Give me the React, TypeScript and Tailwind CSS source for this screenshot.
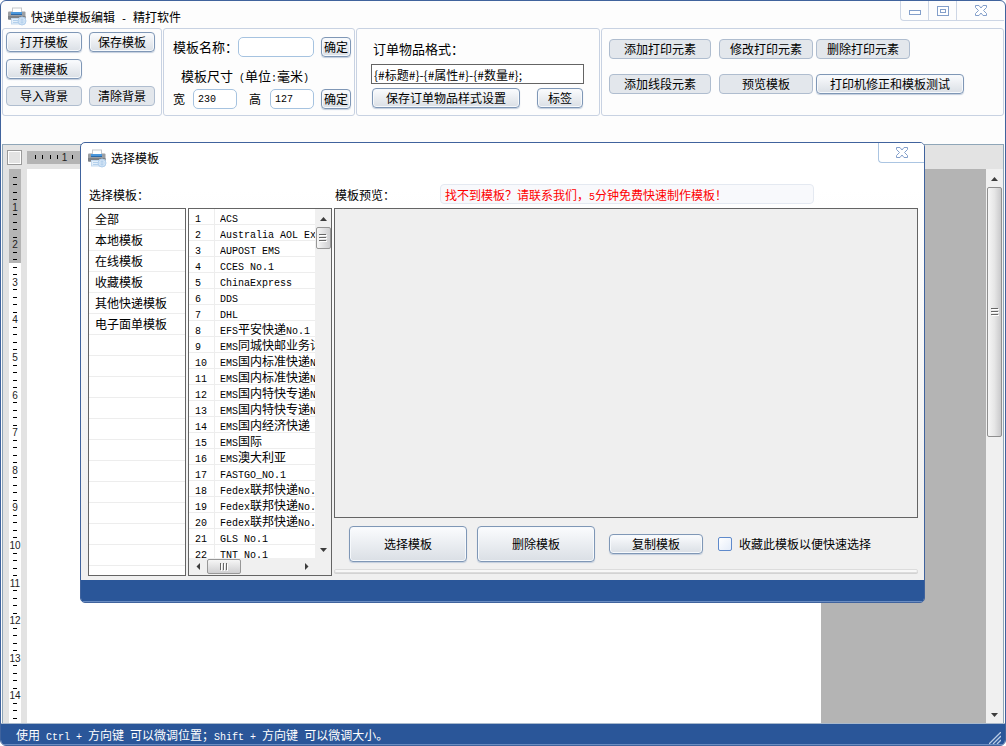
import React from "react";

const CATEGORIES = ["全部", "本地模板", "在线模板", "收藏模板", "其他快递模板", "电子面单模板"];

const TEMPLATES = [
  "ACS",
  "Australia AOL Express",
  "AUPOST EMS",
  "CCES No.1",
  "ChinaExpress",
  "DDS",
  "DHL",
  "EFS平安快递No.1",
  "EMS同城快邮业务详情单",
  "EMS国内标准快递No.1",
  "EMS国内标准快递No.2",
  "EMS国内特快专递No.1",
  "EMS国内特快专递No.2",
  "EMS国内经济快递",
  "EMS国际",
  "EMS澳大利亚",
  "FASTGO_NO.1",
  "Fedex联邦快递No.1",
  "Fedex联邦快递No.2",
  "Fedex联邦快递No.3",
  "GLS No.1",
  "TNT No.1",
];

/* Sets Latin runs in a half-width face next to full-width Chinese. */
function Mixed({ text }: { text: string }) {
  return (
    <span className="whitespace-pre">
      {text.split(/([\x20-\x7e]+)/).map((part, i) =>
        i % 2 === 1 ? (
          <span key={i} className="font-['Liberation_Mono',monospace] text-[10px] leading-none">
            {part}
          </span>
        ) : (
          part
        ),
      )}
    </span>
  );
}

function Btn({
  children,
  className = "",
  off = false,
}: {
  children: React.ReactNode;
  className?: string;
  off?: boolean;
}) {
  const look = off
    ? "border-[#afbdcf] bg-[#e3e7ec]"
    : "border-[#7f97b6] bg-linear-to-b from-[#fbfcfe] to-[#dadfe5] shadow-[0_1px_1px_#c3cedd,inset_0_0_0_1px_#f6f9fc]";
  return (
    <button
      type="button"
      aria-disabled={off}
      className={`flex shrink-0 items-center justify-center whitespace-nowrap rounded-[4px] border ${look} ${className}`}
    >
      {children}
    </button>
  );
}

function PrinterIcon() {
  return (
    <svg width="19" height="19" viewBox="0 0 19 19" aria-hidden="true">
      <rect x="0" y="4.500" width="17.500" height="8.500" rx="1" fill="#9b9ea2" />
      <rect x="0" y="9" width="17.500" height="3" fill="#7c8085" />
      <rect x="4.500" y="1" width="9" height="5" fill="#fff" stroke="#c3c7cc" />
      <rect x="3" y="5" width="11" height="2" fill="#4a97dc" />
      <rect x="3" y="7" width="11" height="1" fill="#2b69a8" />
      <rect x="3.500" y="11.500" width="9" height="5.500" fill="#e3effa" stroke="#c3d9ef" />
      <path d="M5 13.500h6M5 15.500h5" stroke="#b3d0ec" />
      <circle cx="14" cy="14" r="4" fill="#e6f0fa" stroke="#b2cfec" />
      <path d="M14 10v8M10 14h8M11 11.700q3 1.500 6 0M11 16.300q3-1.500 6 0" stroke="#b2cfec" fill="none" />
    </svg>
  );
}

function CloseIcon() {
  return (
    <svg width="12" height="11" viewBox="0 0 12 11" aria-hidden="true">
      <path
        d="M.5.5H4L6 3 8 .5h3.500V2.500L8.500 5.500 11.500 8.500V10.500H8L6 8 4 10.500H.5V8.500L3.500 5.500.5 2.500Z"
        fill="#fff"
        stroke="#839fca"
      />
    </svg>
  );
}

function Arrow({ dir }: { dir: "up" | "down" | "left" | "right" }) {
  const d = {
    up: "M0 6h7L3.500 2Z",
    down: "M0 2h7L3.500 6Z",
    left: "M5 0v7L1.500 3.500Z",
    right: "M2 0v7L5.500 3.500Z",
  }[dir];
  return (
    <svg width="7" height="7" viewBox="0 0 7 7" aria-hidden="true">
      <path d={d} fill="#3c3c3c" />
    </svg>
  );
}

function VGrip() {
  return (
    <svg width="8" height="9" viewBox="0 0 8 9" aria-hidden="true">
      <path d="M0 .5h7M0 3.500h7M0 6.500h7" stroke="#666" />
      <path d="M1 1.500h7M1 4.500h7M1 7.500h7" stroke="#fff" />
    </svg>
  );
}

function HGrip() {
  return (
    <svg width="9" height="8" viewBox="0 0 9 8" aria-hidden="true">
      <path d="M.5 0v7M3.500 0v7M6.500 0v7" stroke="#666" />
      <path d="M1.500 1v7M4.500 1v7M7.500 1v7" stroke="#fff" />
    </svg>
  );
}

const CM = 37.6;

function HorizontalRuler() {
  const marks = Array.from({ length: 9 }, (_, i) => i + 1);
  return (
    <svg className="h-[13px] w-[794px] bg-[#b4b4b4]" aria-hidden="true">
      {marks.map((n) => {
        const x = (n * CM) / 5;
        return n % 5 === 0 ? (
          <text key={n} x={x} y="10" textAnchor="middle" fontSize="10" fontFamily="Liberation Sans" fill="#222">
            {n / 5}
          </text>
        ) : (
          <rect key={n} x={Math.round(x)} y="4" width="1" height="4" fill="#000" />
        );
      })}
    </svg>
  );
}

function VerticalRuler() {
  const marks = Array.from({ length: 73 }, (_, i) => i + 1);
  return (
    <svg className="h-full w-3 shrink-0 bg-white" aria-hidden="true">
      <rect width="12" height="94" fill="#b4b4b4" />
      {marks.map((n) => {
        const y = (n * CM) / 5;
        return n % 5 === 0 ? (
          <text key={n} x="6" y={Math.round(y) + 4} textAnchor="middle" fontSize="10" fontFamily="Liberation Sans" fill="#222">
            {n / 5}
          </text>
        ) : (
          <rect key={n} x="4" y={Math.round(y)} width="4" height="1" fill="#000" />
        );
      })}
    </svg>
  );
}

const PANEL = "rounded-[3px] border border-[#c8d2e2]";
const FIELD = "h-5 min-w-0 rounded-[5px] border border-[#a6c3e0] bg-white px-1 font-['Liberation_Mono',monospace] text-[10px]";

function Toolbar() {
  return (
    <div className="flex h-[88px] gap-px px-px">
      <section className={`${PANEL} grid w-40 shrink-0 grid-cols-[76px_66px] content-start gap-[7px] p-[3px]`}>
        <Btn className="h-5">打开模板</Btn>
        <Btn className="h-5">保存模板</Btn>
        <Btn className="col-span-2 h-5 w-[76px]">新建模板</Btn>
        <Btn off className="h-5">导入背景</Btn>
        <Btn off className="h-5">清除背景</Btn>
      </section>

      <section className={`${PANEL} flex w-48 shrink-0 flex-col pt-2 pr-[3px] pl-[9px]`}>
        <div className="flex items-center">
          <label htmlFor="tpl-name" className="w-[65px] text-[13px] whitespace-nowrap">
            模板名称：
          </label>
          <input id="tpl-name" className={`${FIELD} w-[76px]`} />
          <Btn className="ml-[7px] h-5 w-[30px]">确定</Btn>
        </div>
        <p className="h-8 pt-[11px] pl-2 text-[13px] leading-4">
          <Mixed text="模板尺寸 (单位:毫米)" />
        </p>
        <div className="flex items-center">
          <label htmlFor="tpl-w" className="w-5">宽</label>
          <input id="tpl-w" defaultValue="230" className={`${FIELD} w-11`} />
          <label htmlFor="tpl-h" className="ml-3 w-[21px]">高</label>
          <input id="tpl-h" defaultValue="127" className={`${FIELD} w-11`} />
          <Btn className="ml-[7px] h-5 w-[30px]">确定</Btn>
        </div>
      </section>

      <section className={`${PANEL} flex w-[244px] shrink-0 flex-col px-[14px] pt-3`}>
        <label htmlFor="order-fmt" className="h-[23px] pl-[2px] text-[13px] leading-4">
          订单物品格式：
        </label>
        <input
          id="order-fmt"
          defaultValue="{#标题#}-{#属性#}-{#数量#};"
          className="h-5 w-[213px] border border-[#646464] bg-white px-[2px]"
        />
        <div className="mt-1 flex justify-between pr-[2px] pl-px">
          <Btn className="h-5 w-[148px]">保存订单物品样式设置</Btn>
          <Btn className="h-5 w-[46px]">标签</Btn>
        </div>
      </section>

      <section className={`${PANEL} flex min-w-0 flex-1 flex-col gap-[15px] px-[7px] pt-[10px]`}>
        <div className="flex">
          <Btn off className="h-5 w-[102px]">添加打印元素</Btn>
          <Btn off className="ml-2 h-5 w-[94px]">修改打印元素</Btn>
          <Btn off className="ml-[3px] h-5 w-[94px]">删除打印元素</Btn>
        </div>
        <div className="flex">
          <Btn off className="h-5 w-[102px]">添加线段元素</Btn>
          <Btn off className="ml-2 h-5 w-[94px]">预览模板</Btn>
          <Btn className="ml-[3px] h-5 w-[148px]">打印机修正和模板测试</Btn>
        </div>
      </section>
    </div>
  );
}

function Workspace() {
  return (
    <div className="mx-px mt-7 flex min-h-0 flex-1 flex-col overflow-hidden border-x border-t border-[#8fa6b8] bg-[#e3e3e3]">
      <div className="flex h-6 shrink-0 items-center gap-[5px] overflow-hidden pl-1">
        <div className="size-[15px] shrink-0 border border-[#9a9a9a] bg-[#e3e3e3] shadow-[inset_0_0_0_1px_#fff]" />
        <HorizontalRuler />
      </div>
      <div className="flex min-h-0 flex-1">
        <div className="w-6 shrink-0 overflow-hidden pl-1.5">
          <VerticalRuler />
        </div>
        <div className="flex min-w-0 flex-1 bg-[#b4b4b4]">
          <div className="w-[794px] bg-white" />
        </div>
        <div className="flex w-[17px] shrink-0 flex-col items-center bg-[#f0f0f0] px-px">
          <button type="button" aria-label="向上滚动" className="flex h-[18px] w-full items-center justify-center">
            <Arrow dir="up" />
          </button>
          <div className="flex h-[250px] w-full items-center justify-center rounded-[2px] border border-[#8f8f8f] bg-linear-to-r from-[#f6f6f6] via-[#e6e6e6] to-[#c9c9cb]">
            <VGrip />
          </div>
          <div className="flex-1" />
          <button type="button" aria-label="向下滚动" className="flex h-[18px] w-full items-center justify-center">
            <Arrow dir="down" />
          </button>
        </div>
      </div>
    </div>
  );
}

function TemplateList() {
  return (
    <div className="flex w-36 shrink-0 flex-col border border-[#646464] bg-[#f0f0f0]">
      <div className="flex h-[349px]">
        <div className="min-w-0 flex-1 overflow-hidden bg-white">
          <table className="w-full table-fixed border-separate border-spacing-0">
            <tbody>
              {TEMPLATES.map((name, i) => (
                <tr key={name}>
                  <td className="w-[26px] border-r border-b border-[#ededed] p-0 pl-1.5">
                    <div className="h-[15px] leading-[15px]">
                      <Mixed text={String(i + 1)} />
                    </div>
                  </td>
                  <td className="border-b border-[#ededed] p-0 pl-[5px]">
                    <div className="h-[15px] overflow-hidden leading-[15px]">
                      <Mixed text={name} />
                    </div>
                  </td>
                </tr>
              ))}
            </tbody>
          </table>
        </div>
        <div className="flex w-4 shrink-0 flex-col items-center">
          <button type="button" aria-label="列表向上" className="flex h-[18px] w-full items-center justify-center">
            <Arrow dir="up" />
          </button>
          <div className="flex h-[22px] w-[15px] items-center justify-center rounded-[2px] border border-[#979797] bg-linear-to-r from-[#f6f6f6] to-[#cfcfd1]">
            <VGrip />
          </div>
          <div className="flex-1" />
          <button type="button" aria-label="列表向下" className="flex h-[18px] w-full items-center justify-center">
            <Arrow dir="down" />
          </button>
        </div>
      </div>
      <div className="flex h-[17px] items-center pr-4">
        <button type="button" aria-label="列表向左" className="flex h-full w-[18px] items-center justify-center">
          <Arrow dir="left" />
        </button>
        <div className="flex h-[15px] w-[34px] items-center justify-center rounded-[2px] border border-[#979797] bg-linear-to-b from-[#f6f6f6] to-[#cfcfd1]">
          <HGrip />
        </div>
        <div className="flex-1" />
        <button type="button" aria-label="列表向右" className="flex h-full w-[18px] items-center justify-center">
          <Arrow dir="right" />
        </button>
      </div>
    </div>
  );
}

function TemplateDialog() {
  return (
    <div
      role="dialog"
      aria-label="选择模板"
      className="absolute top-[141px] right-20 left-[79px] flex flex-col overflow-hidden rounded-[5px] border border-[#40639d] bg-linear-to-b from-white from-10% to-[#f0f0f0] to-80%"
    >
      <header className="flex h-[41px] pl-[7px]">
        <div className="flex h-[30px] flex-1 items-center gap-1">
          <PrinterIcon />
          <h2>选择模板</h2>
        </div>
        <button
          type="button"
          aria-label="关闭"
          className="flex h-5 w-[46px] items-center justify-center rounded-bl-[4px] border-b border-l border-[#abc5e2] bg-white"
        >
          <CloseIcon />
        </button>
      </header>

      <div className="flex h-6 pl-2">
        <h3 className="w-[246px] shrink-0 leading-[22px]">选择模板：</h3>
        <h3 className="w-[105px] shrink-0 leading-[22px]">模板预览：</h3>
        <p className="h-5 w-[374px] rounded-[4px] border border-[#e4e9f1] bg-[#f8f9fc] pl-1 leading-[20px] whitespace-nowrap text-[#ff0000]">
          <Mixed text="找不到模板？请联系我们，5分钟免费快速制作模板！" />
        </p>
      </div>

      <div className="flex gap-[2px] pr-[6px] pl-[7px]">
        <ul className="h-[368px] w-[98px] shrink-0 overflow-hidden border border-[#646464] bg-white">
          {Array.from({ length: 18 }, (_, i) => (
            <li key={i} className="h-[21px] border-b border-[#ededed] pl-1.5 leading-[20px]">
              {CATEGORIES[i]}
            </li>
          ))}
        </ul>
        <TemplateList />
        <div className="flex min-w-0 flex-1 flex-col">
          <div className="h-[310px] border border-[#646464] bg-[#efefef]" />
          <div className="flex h-[51px] items-center pl-[15px]">
            <Btn className="h-9 w-[118px]">选择模板</Btn>
            <Btn className="ml-[10px] h-9 w-[118px]">删除模板</Btn>
            <Btn className="ml-[14px] h-5 w-[94px]">复制模板</Btn>
            <label className="ml-[15px] flex items-center gap-[7px] whitespace-nowrap">
              <input
                type="checkbox"
                className="size-[14px] appearance-none rounded-[2px] border border-[#5f8acb] bg-linear-to-br from-white to-[#e4ecf9]"
              />
              收藏此模板以便快速选择
            </label>
          </div>
          <div className="h-1 rounded-[2px] border border-[#dcdcdc] bg-[#f8f8f8] shadow-[0_1px_0_#d3d3d3]" />
        </div>
      </div>
      <footer className="mt-1 h-[22px] border-b border-[#6a8dc2] bg-[#2a5699]" />
    </div>
  );
}

export default function App() {
  return (
    <main className="relative flex h-screen min-h-[640px] flex-col overflow-hidden rounded-[6px] border border-[#40639d] bg-[#fdfdfd] font-['Noto_Sans_CJK_SC',sans-serif] text-xs leading-4 text-black">
      <header className="flex h-[27px] shrink-0 pl-[7px]">
        <div className="flex flex-1 items-center gap-1 pt-1">
          <PrinterIcon />
          <h1>
            <Mixed text="快递单模板编辑 - 精打软件" />
          </h1>
        </div>
        <div className="mr-px flex h-5 rounded-bl-[4px] border-b border-l border-[#cdd6e5]">
          <button type="button" aria-label="最小化" className="flex w-[28px] items-center justify-center border-r border-[#cdd6e5] pt-1">
            <svg width="12" height="5" viewBox="0 0 12 5" aria-hidden="true">
              <rect x=".5" y=".5" width="11" height="4" fill="#fff" stroke="#839fca" />
            </svg>
          </button>
          <button type="button" aria-label="最大化" className="flex w-[28px] items-center justify-center border-r border-[#cdd6e5]">
            <svg width="12" height="10" viewBox="0 0 12 10" aria-hidden="true">
              <rect x=".5" y=".5" width="11" height="9" fill="#fff" stroke="#839fca" />
              <rect x="3.500" y="3.500" width="5" height="3" fill="#fff" stroke="#839fca" />
            </svg>
          </button>
          <button type="button" aria-label="关闭窗口" className="flex w-[47px] items-center justify-center">
            <CloseIcon />
          </button>
        </div>
      </header>

      <Toolbar />
      <Workspace />

      <footer className="flex h-[22px] shrink-0 items-center justify-between border-t border-b border-t-[#a9b9cc] border-b-[#6a8dc2] bg-[#2a5699] pr-1 pl-[15px] text-white">
        <p className="pt-[2px]">
          <Mixed text="使用 Ctrl + 方向键 可以微调位置；Shift + 方向键 可以微调大小。" />
        </p>
        <svg width="12" height="12" viewBox="0 0 12 12" className="self-end" aria-hidden="true">
          <path d="M0 12 12 0M4 12l8-8M8 12l4-4" stroke="#b9cbe4" strokeWidth="1.300" />
        </svg>
      </footer>

      <TemplateDialog />
    </main>
  );
}
